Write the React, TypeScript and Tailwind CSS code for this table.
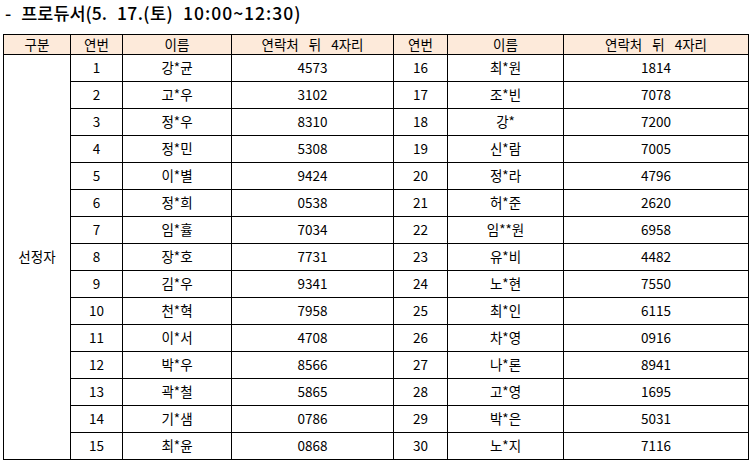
import React from "react";

const left: [string, string, string][] = [
  ["1", "강*균", "4573"],
  ["2", "고*우", "3102"],
  ["3", "정*우", "8310"],
  ["4", "정*민", "5308"],
  ["5", "이*별", "9424"],
  ["6", "정*희", "0538"],
  ["7", "임*휼", "7034"],
  ["8", "장*호", "7731"],
  ["9", "김*우", "9341"],
  ["10", "천*혁", "7958"],
  ["11", "이*서", "4708"],
  ["12", "박*우", "8566"],
  ["13", "곽*철", "5865"],
  ["14", "기*샘", "0786"],
  ["15", "최*윤", "0868"],
];

const right: [string, string, string][] = [
  ["16", "최*원", "1814"],
  ["17", "조*빈", "7078"],
  ["18", "강*", "7200"],
  ["19", "신*람", "7005"],
  ["20", "정*라", "4796"],
  ["21", "허*준", "2620"],
  ["22", "임**원", "6958"],
  ["23", "유*비", "4482"],
  ["24", "노*현", "7550"],
  ["25", "최*인", "6115"],
  ["26", "차*영", "0916"],
  ["27", "나*론", "8941"],
  ["28", "고*영", "1695"],
  ["29", "박*은", "5031"],
  ["30", "노*지", "7116"],
];

const cell = "border border-black text-center p-0 align-middle";
const head = `${cell} font-normal`;
const wide = `${cell} font-normal [word-spacing:7px]`;

export default function App() {
  return (
    <div
      className="w-[755px] h-[468px] bg-white text-black overflow-hidden"
      style={{ fontFamily: '"Noto Sans CJK KR", "Noto Sans", sans-serif' }}
    >
      <div className="h-[34px] pl-[5px] pt-[1px] text-[17.5px] font-medium leading-[24px] [word-spacing:6px]">
        - 프로듀서(5. <span className="tracking-[0.4px]">17.(토)</span>{" "}
        <span className="tracking-[1px]">10:00~12:30)</span>
      </div>
      <table className="ml-[3px] w-[745px] border-collapse table-fixed text-[13.5px] leading-none">
        <colgroup>
          <col className="w-[67px]" />
          <col className="w-[52px]" />
          <col className="w-[109px]" />
          <col className="w-[162px]" />
          <col className="w-[54px]" />
          <col className="w-[116px]" />
          <col className="w-[185px]" />
        </colgroup>
        <thead>
          <tr className="h-[20px] bg-[#fdeada]">
            <th className={head}>구분</th>
            <th className={head}>연번</th>
            <th className={head}>이름</th>
            <th className={wide}>연락처 뒤 4자리</th>
            <th className={head}>연번</th>
            <th className={head}>이름</th>
            <th className={wide}>연락처 뒤 4자리</th>
          </tr>
        </thead>
        <tbody>
          {left.map((l, i) => {
            const r = right[i];
            return (
              <tr key={i} className="h-[27px]">
                {i === 0 && (
                  <td className={cell} rowSpan={15}>
                    선정자
                  </td>
                )}
                <td className={cell}>{l[0]}</td>
                <td className={cell}>{l[1]}</td>
                <td className={cell}>{l[2]}</td>
                <td className={cell}>{r[0]}</td>
                <td className={cell}>{r[1]}</td>
                <td className={cell}>{r[2]}</td>
              </tr>
            );
          })}
        </tbody>
      </table>
    </div>
  );
}
